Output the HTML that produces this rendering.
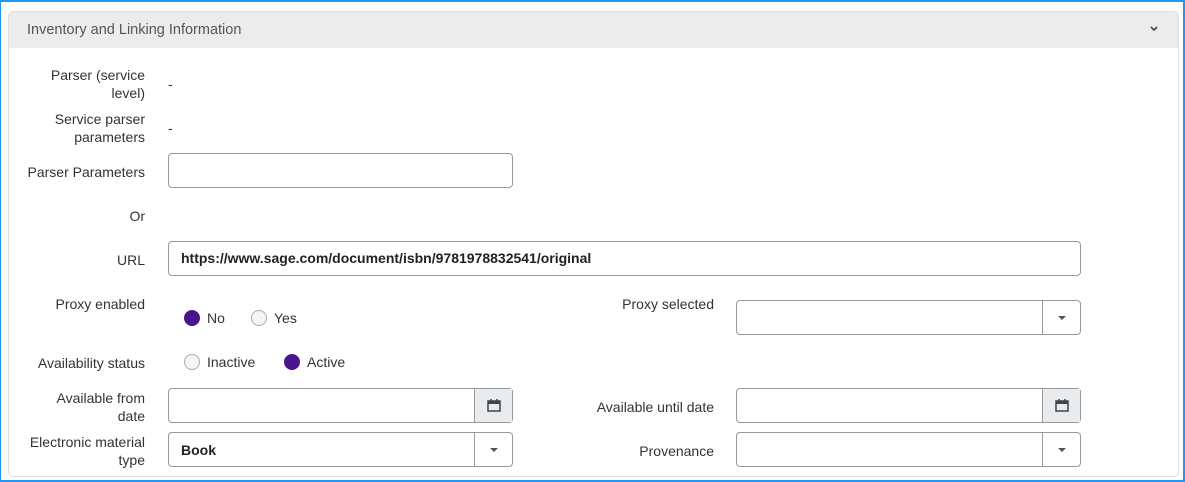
<!DOCTYPE html>
<html><head><style>
*{box-sizing:border-box;margin:0;padding:0}
body{width:1185px;height:482px;position:relative;background:#fff;font-family:"Liberation Sans",sans-serif;font-size:14px;color:#333;overflow:hidden}
.frame{position:absolute;left:0;top:0;width:1185px;height:482px;border:1px solid #2196f3;border-width:2px 2px 2px 1px}
.card{position:absolute;left:8px;top:11px;width:1171px;height:466px;border:1px solid #ddd;border-radius:5px;overflow:hidden}
.hdr{position:absolute;left:0;top:0;right:0;height:36px;background:#ececec;color:#555;font-size:14.5px;padding:10px 0 0 18px}
.chev{position:absolute;right:18px;top:12px}
.lbl{position:absolute;right:1040px;text-align:right;line-height:18px;color:#333;white-space:nowrap}
.inp{position:absolute;height:35px;border:1px solid #999;border-radius:4px;background:#fff}
.btn{position:absolute;top:0;right:0;bottom:0;border-left:1px solid #999;width:38px;display:flex;align-items:center;justify-content:center}
.radio{position:absolute;width:16px;height:16px;border-radius:50%}
.on{background:#4b148c}
.off{border:1px solid #aaa;background:#f6f6f6}
.t{position:absolute;white-space:nowrap}
.b{font-weight:bold;color:#222}
</style></head><body>
<div class="frame"></div>
<div class="card">
<div class="hdr">Inventory and Linking Information
<svg class="chev" width="12" height="10" viewBox="0 0 12 10"><path d="M3 3l3 3 3-3" stroke="#444" stroke-width="1.6" fill="none"/></svg></div>
</div>
<div class="lbl" style="top:66px">Parser (service<br>level)</div>
<div class="t" style="left:168px;top:76px">-</div>
<div class="lbl" style="top:110px">Service parser<br>parameters</div>
<div class="t" style="left:168px;top:120px">-</div>
<div class="lbl" style="top:163px">Parser Parameters</div>
<div class="inp" style="left:168px;top:153px;width:345px"></div>
<div class="lbl" style="top:207px">Or</div>
<div class="lbl" style="top:251px">URL</div>
<div class="inp" style="left:168px;top:241px;width:913px"><span class="t b" style="left:12px;top:8px">https://www.sage.com/document/isbn/9781978832541/original</span></div>
<div class="lbl" style="top:295px">Proxy enabled</div>
<div class="radio on" style="left:184px;top:310px"></div><span class="t" style="left:207px;top:310px">No</span>
<div class="radio off" style="left:251px;top:310px"></div><span class="t" style="left:274px;top:310px">Yes</span>
<div class="t" style="left:560px;top:296px;width:154px;text-align:right">Proxy selected</div>
<div class="inp" style="left:736px;top:300px;width:345px"><div class="btn"><svg width="10" height="6"><path d="M1 1h8L5 5z" fill="#555"/></svg></div></div>
<div class="lbl" style="top:354px">Availability status</div>
<div class="radio off" style="left:184px;top:354px"></div><span class="t" style="left:207px;top:354px">Inactive</span>
<div class="radio on" style="left:284px;top:354px"></div><span class="t" style="left:307px;top:354px">Active</span>
<div class="lbl" style="top:389px">Available from<br>date</div>
<div class="inp" style="left:168px;top:388px;width:345px"><div class="btn" style="background:#e9ecef"><svg width="14" height="13" viewBox="0 0 14 13"><rect x="1" y="2" width="12" height="10" fill="none" stroke="#444" stroke-width="1.5"/><rect x="1" y="2" width="12" height="3" fill="#444"/><path d="M4 0v3M10 0v3" stroke="#444" stroke-width="1.5"/></svg></div></div>
<div class="t" style="left:560px;top:399px;width:154px;text-align:right">Available until date</div>
<div class="inp" style="left:736px;top:388px;width:345px"><div class="btn" style="background:#e9ecef"><svg width="14" height="13" viewBox="0 0 14 13"><rect x="1" y="2" width="12" height="10" fill="none" stroke="#444" stroke-width="1.5"/><rect x="1" y="2" width="12" height="3" fill="#444"/><path d="M4 0v3M10 0v3" stroke="#444" stroke-width="1.5"/></svg></div></div>
<div class="lbl" style="top:433px">Electronic material<br>type</div>
<div class="inp" style="left:168px;top:432px;width:345px"><span class="t b" style="left:12px;top:9px">Book</span><div class="btn"><svg width="10" height="6"><path d="M1 1h8L5 5z" fill="#555"/></svg></div></div>
<div class="t" style="left:560px;top:443px;width:154px;text-align:right">Provenance</div>
<div class="inp" style="left:736px;top:432px;width:345px"><div class="btn"><svg width="10" height="6"><path d="M1 1h8L5 5z" fill="#555"/></svg></div></div>
</body></html>
